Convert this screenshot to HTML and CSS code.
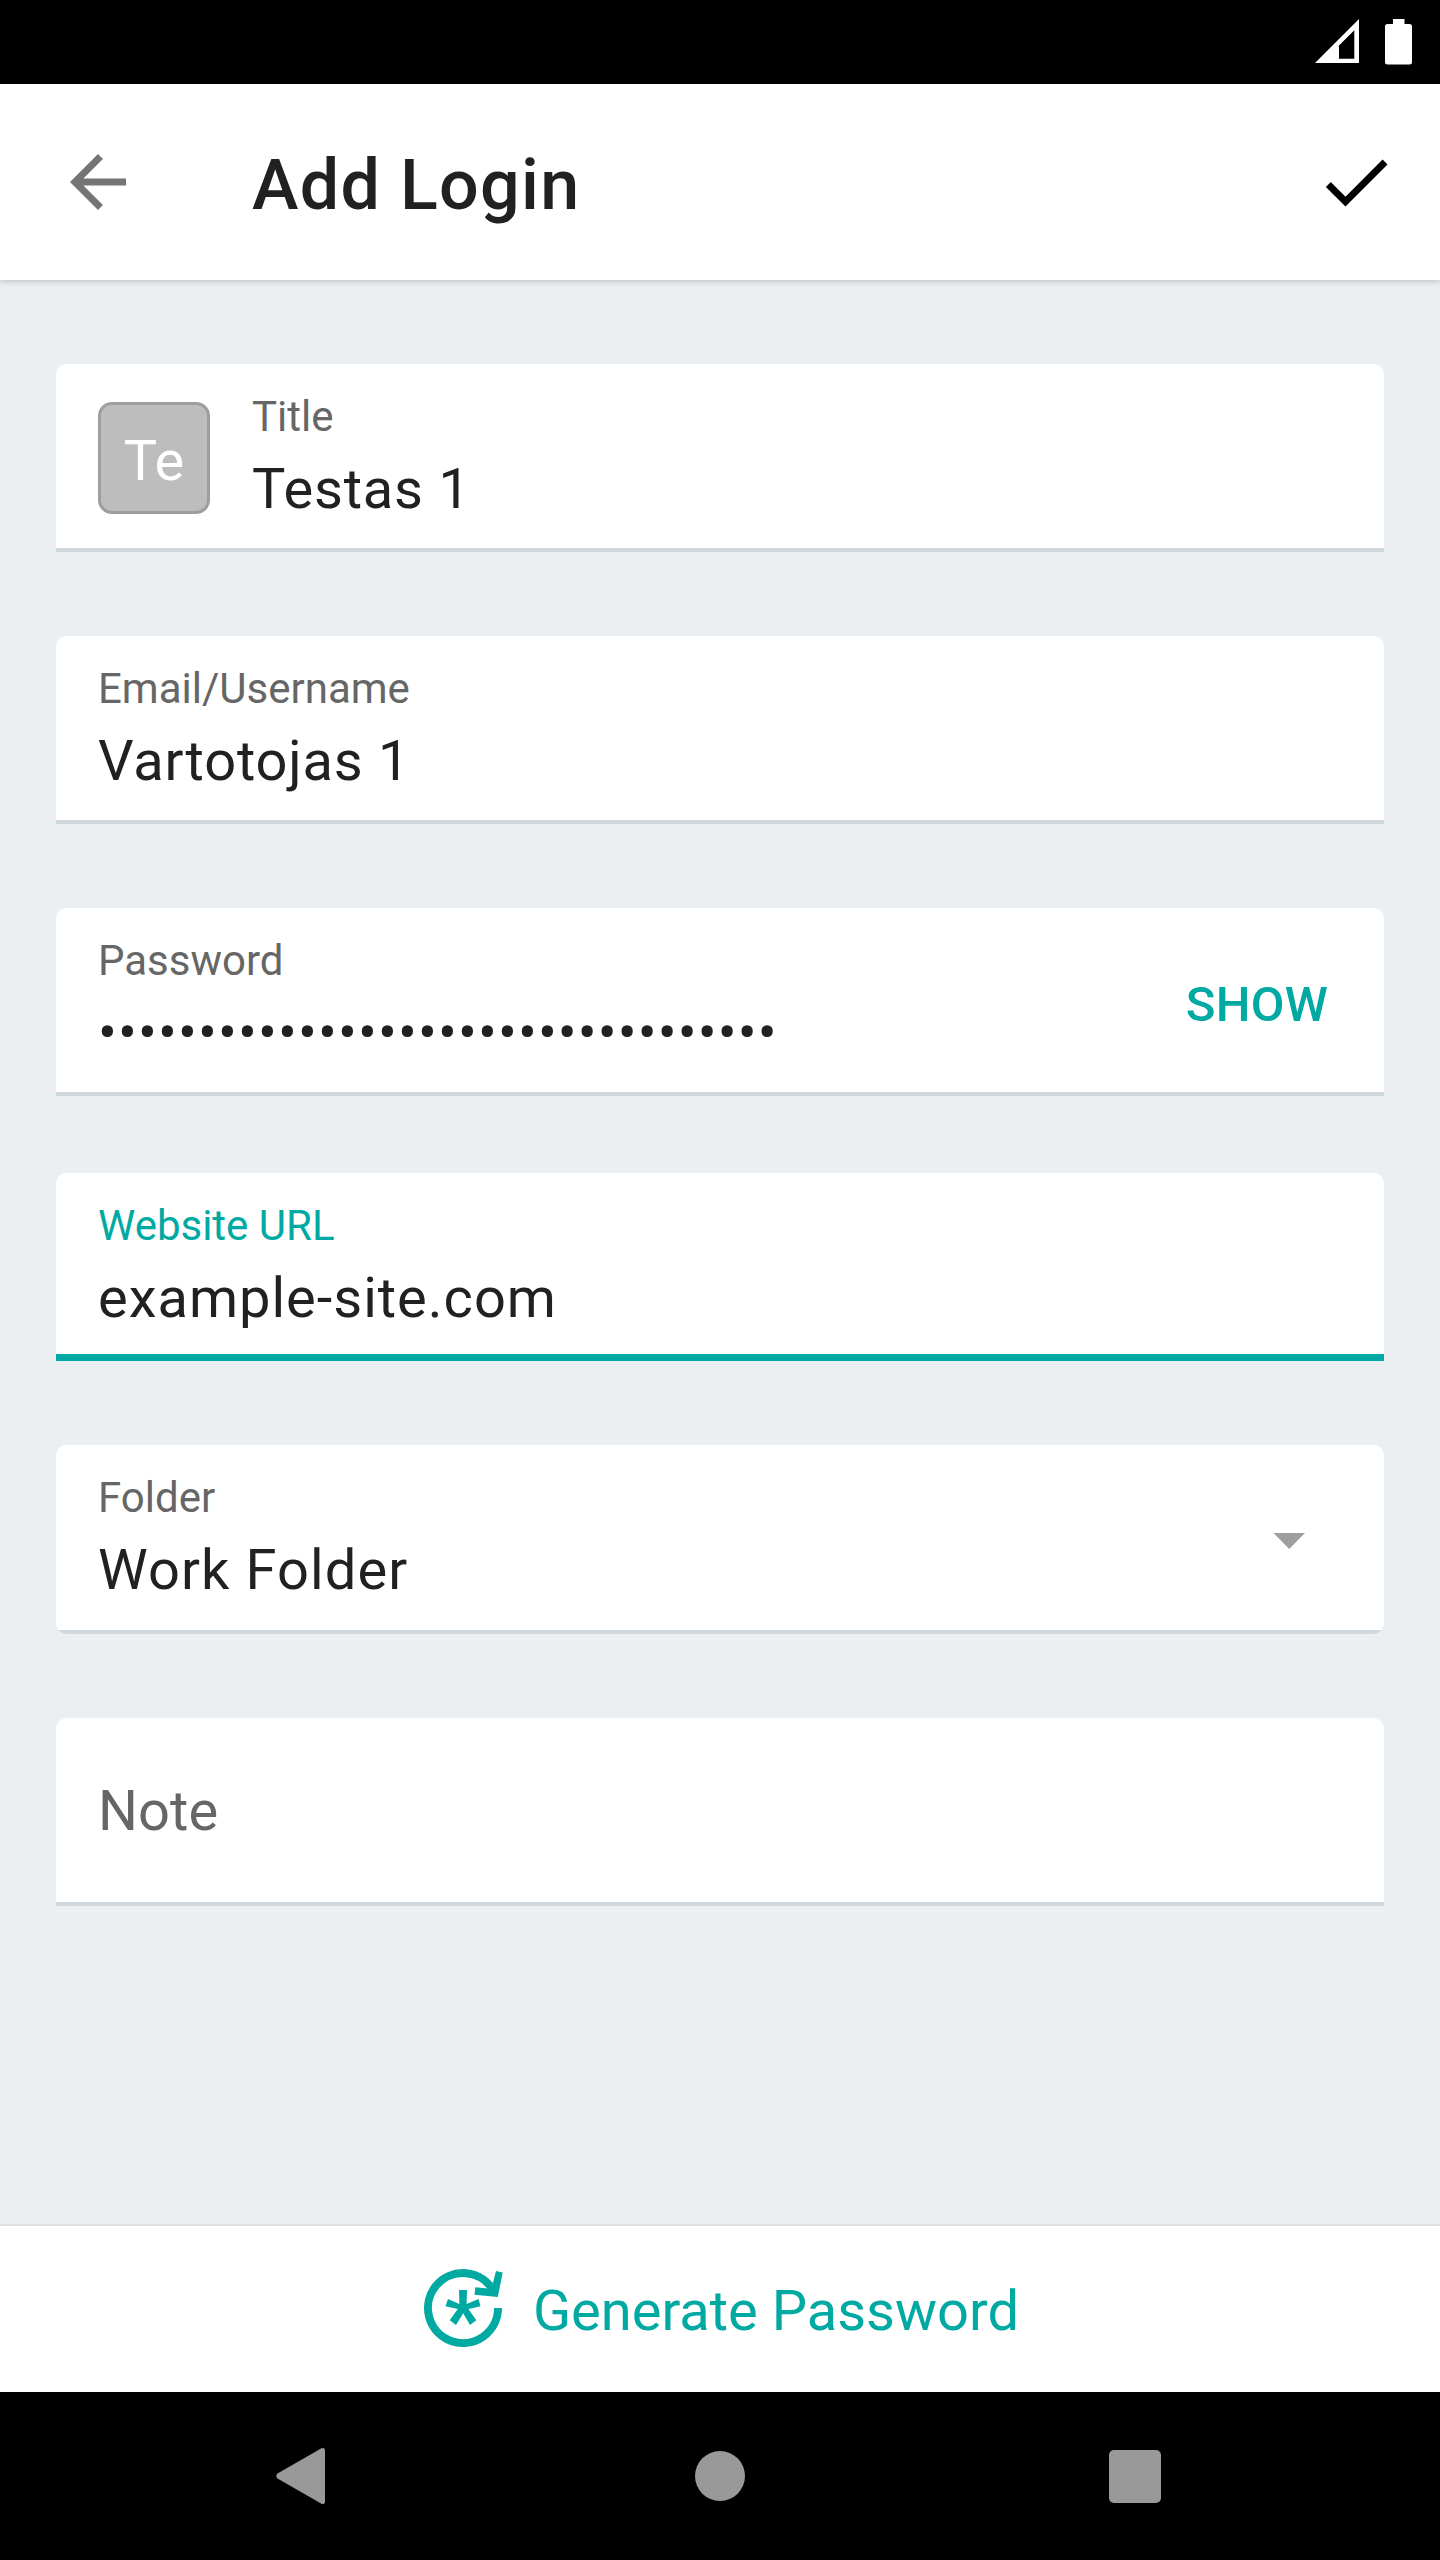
FILE: index.html
```html
<!DOCTYPE html>
<html lang="en">
<head>
<meta charset="utf-8">
<title>Add Login</title>
<link rel="stylesheet" href="styles.css">
</head>
<body>
<div class="screen">
  <div class="status-bar">
    <svg class="signal" width="44" height="44" viewBox="0 0 44 44"><path fill="#fff" fill-rule="evenodd" d="M0 44L44 0V44ZM24 26.5V39.8H39.3V11.2Z"/></svg>
    <svg class="battery" width="27" height="46" viewBox="0 0 27 46"><path fill="#fff" d="M8 0H19.5V5H24.500Q27 5 27 7.500V43Q27 45.500 24.500 45.500H2.500Q0 45.500 0 43V7.500Q0 5 2.500 5H8Z"/></svg>
  </div>
  <header class="app-bar">
    <svg class="icon" viewBox="0 0 24 24"><path fill="#757575" d="M20 11H7.830l5.590-5.590L12 4l-8 8 8 8 1.410-1.410L7.830 13H20v-2z"/></svg>
    <h1 class="app-title">Add Login</h1>
    <svg class="icon" viewBox="0 0 24 24"><path fill="#000" d="M9 16.200L4.800 12l-1.400 1.400L9 19 21 7l-1.400-1.400L9 16.200z"/></svg>
  </header>
  <main class="form">
    <div class="field">
      <div class="avatar">Te</div>
      <div class="texts"><div class="label">Title</div><div class="value">Testas 1</div></div>
    </div>
    <div class="field">
      <div class="texts"><div class="label">Email/Username</div><div class="value">Vartotojas 1</div></div>
    </div>
    <div class="field">
      <div class="texts"><div class="label">Password</div><div class="value dots">••••••••••••••••••••••••••••••••••</div></div>
      <div class="show">SHOW</div>
    </div>
    <div class="field focused">
      <div class="texts"><div class="label">Website URL</div><div class="value">example-site.com</div></div>
    </div>
    <div class="field select">
      <div class="texts"><div class="label">Folder</div><div class="value">Work Folder</div></div>
      <svg class="caret" width="32" height="16" viewBox="0 0 32 16"><path fill="#9e9e9e" d="M.5 0H32L16.200 16Z"/></svg>
    </div>
    <div class="field note">
      <div class="value placeholder">Note</div>
    </div>
  </main>
  <footer class="generate">
    <svg width="80" height="80" viewBox="423 2269 80 80" overflow="visible">
      <path fill="none" stroke="#00a9a2" stroke-width="8" d="M498 2308A35 35 0 1 1 493.300 2290.500"/>
      <path fill="#00a9a2" d="M496 2271L502.700 2272.500L497.800 2297L474.500 2294.700L475.300 2287.300L487.500 2288.600L493 2282.700Z"/>
      <path fill="#00a9a2" d="M459 2290H467L466.600 2304L478.500 2299L480.500 2306.300L468.500 2309L476.300 2320.300L470 2325L463.200 2313.300L456 2325L449.700 2320.300L457.800 2309L445.500 2306.300L448 2299L459.400 2304Z"/>
    </svg>
    <span class="generate-text">Generate Password</span>
  </footer>
  <nav class="nav-bar">
    <svg class="nav-back" width="50" height="58" viewBox="0 0 50 58"><path fill="#999" d="M45 1.500Q49 -.500 49 4V54Q49 58.500 45 56.500L1.500 31.500Q-1 29 1.500 26.500Z"/></svg>
    <div class="nav-home"></div>
    <div class="nav-recent"></div>
  </nav>
</div>
</body>
</html>
```
FILE: styles.css
```css
* { box-sizing: border-box; }
body {
  margin: 0;
  font-family: Roboto, "Liberation Sans", sans-serif;
  color: #212121;
}
.screen {
  width: 1440px;
  height: 2560px;
  display: flex;
  flex-direction: column;
  background: #ebeff2;
}
.status-bar {
  height: 84px;
  flex: none;
  background: #000;
  display: flex;
  justify-content: flex-end;
  gap: 26px;
  padding: 19px 28px 0 0;
}
.app-bar {
  height: 196px;
  flex: none;
  background: #fff;
  display: flex;
  align-items: center;
  padding: 0 42px 0 56px;
  box-shadow: 0 1px 7px rgba(0, 0, 0, .22);
}
.icon { width: 84px; height: 84px; flex: none; }
.app-title {
  flex: 1;
  margin: 6px 0 0 112px;
  font-size: 70px;
  line-height: 82px;
  font-weight: 500;
  letter-spacing: 1.3px;
}
.form {
  flex: 1;
  padding: 84px 56px 0;
  display: flex;
  flex-direction: column;
}
.field {
  height: 188px;
  flex: none;
  display: flex;
  padding: 28px 56px 0 42px;
  margin-bottom: 84px;
  border-radius: 11px 11px 0 0;
  background: linear-gradient(#cfd8dc, #cfd8dc) bottom / 100% 4px no-repeat, #fff;
}
.field:nth-child(3) { margin-bottom: 77px; }
.focused { background: linear-gradient(#00a9a2, #00a9a2) bottom / 100% 7px no-repeat, #fff; }
.select { height: 189px; border-radius: 11px; }
.texts { flex: 1; }
.label {
  font-size: 42px;
  line-height: 49px;
  color: #666;
}
.focused .label { color: #00a9a2; }
.value {
  margin-top: 15px;
  font-size: 56px;
  line-height: 66px;
  letter-spacing: .8px;
  white-space: nowrap;
}
.dots, .select .value { letter-spacing: 1.1px; }
.focused .value { letter-spacing: 1px; }
.placeholder { margin-top: 32px; color: #666; letter-spacing: .1px; }
.avatar {
  width: 112px;
  height: 112px;
  flex: none;
  margin: 10px 42px 0 0;
  padding-top: 23px;
  border: 3px solid #9e9e9e;
  border-radius: 14px;
  background: #bdbdbd;
  color: #fff;
  font-size: 56px;
  line-height: 66px;
  text-align: center;
}
.show {
  margin-top: 40px;
  color: #00a9a2;
  font-size: 49px;
  line-height: 57px;
  font-weight: 500;
  letter-spacing: .2px;
}
.caret { margin: 60px 23px 0 0; }
.generate {
  height: 168px;
  flex: none;
  background: #fff;
  border-top: 2px solid #e0e0e0;
  display: flex;
  align-items: center;
  justify-content: center;
  gap: 30px;
  padding-left: 2px;
  color: #00a9a2;
}
.generate-text { font-size: 56px; line-height: 66px; margin-top: 4px; }
.nav-bar {
  height: 168px;
  flex: none;
  background: #000;
  display: flex;
  align-items: center;
  justify-content: space-between;
  padding: 0 279px 0 276px;
}
.nav-home { width: 50px; height: 50px; margin-left: 5px; border-radius: 50%; background: #999; }
.nav-recent { width: 52px; height: 53px; border-radius: 5px; background: #999; }
```
